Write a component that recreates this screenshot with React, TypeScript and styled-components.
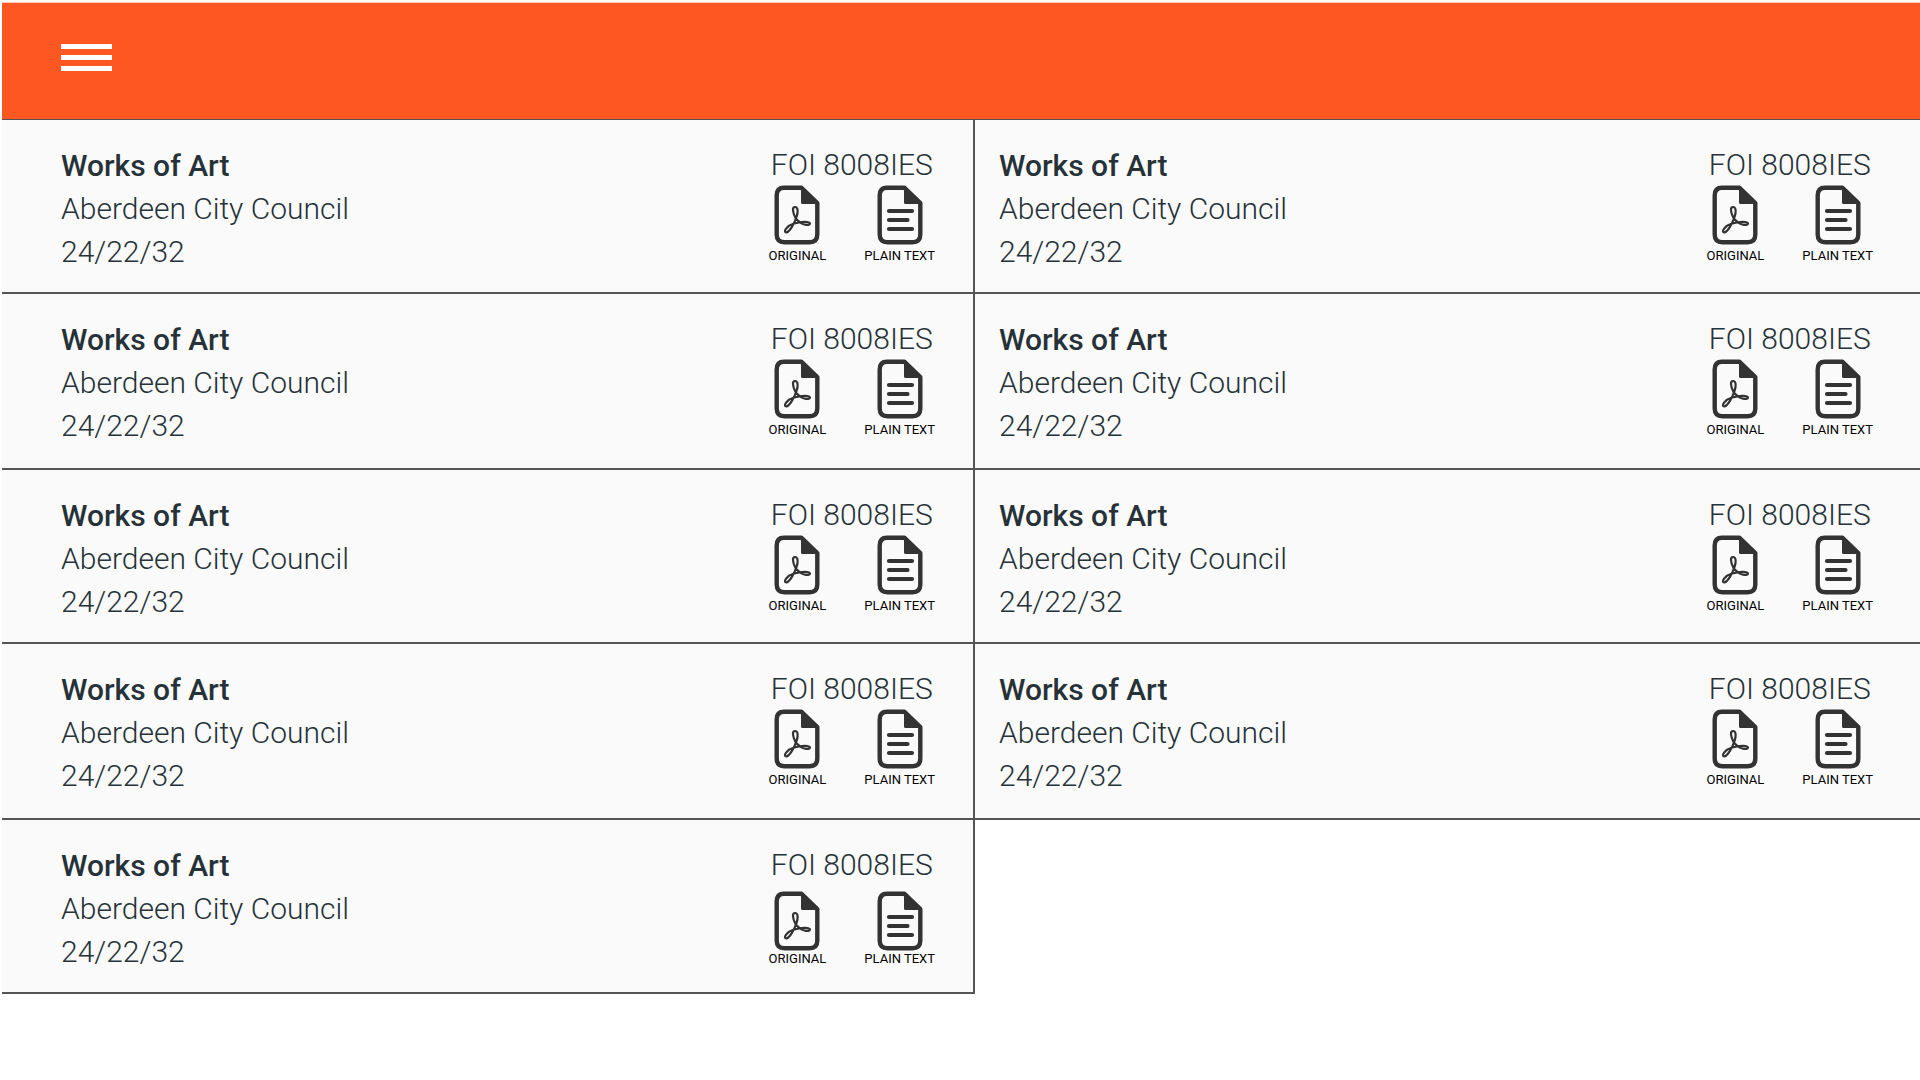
import React from "react";
import styled, { createGlobalStyle } from "styled-components";

const GlobalStyle = createGlobalStyle`
  *, *::before, *::after { box-sizing: border-box; }
  body { margin: 0; background: #fff; font-family: Roboto, "Liberation Sans", sans-serif; color: #263238; }
`;

const Page = styled.div`
  padding: 2px 0 0 2px;
`;

const Header = styled.header`
  display: flex;
  align-items: flex-start;
  height: 118px;
  padding: 41px 59px;
  background: #ff5722;
  border-top: 1px solid #ffccbc;
  border-bottom: 1px solid #555;
`;

const MenuButton = styled.button`
  display: flex;
  flex-direction: column;
  gap: 6px;
  width: 51px;
  padding: 0;
  border: 0;
  background: none;
  cursor: pointer;
`;

const Bar = styled.span`
  width: 100%;
  height: 5px;
  background: #fff;
`;

const Grid = styled.main`
  display: grid;
  grid-template-columns: calc(50% + 14px) 1fr;
  grid-auto-rows: minmax(174px, auto) minmax(176px, auto);
`;

const Card = styled.article<{ $first: boolean }>`
  display: flex;
  justify-content: space-between;
  padding: ${(p) => (p.$first ? "24px 38px 0 59px" : "24px 47px 0 24px")};
  background: #fafafa;
  border-bottom: 2px solid #555;
  border-right: ${(p) => (p.$first ? "2px solid #555" : "0")};
`;

const Lines = styled.div`
  font-size: 30px;
  line-height: 43px;
  font-weight: 300;
`;

const Title = styled.h2`
  margin: 0;
  font-size: 30px;
  line-height: 43px;
  font-weight: 500;
`;

const Text = styled.p`
  margin: 0;
`;

const Files = styled.div`
  display: flex;
  flex-direction: column;
  align-items: center;
`;

const Reference = styled.p`
  margin: 0;
  font-size: 30px;
  line-height: 41px;
  font-weight: 300;
`;

const Downloads = styled.div<{ $spaced: boolean }>`
  display: flex;
  gap: 38px;
  padding-top: ${(p) => (p.$spaced ? "6px" : "0")};
`;

const Download = styled.a<{ $tight: boolean }>`
  display: flex;
  flex-direction: column;
  align-items: center;
  gap: ${(p) => (p.$tight ? "0" : "3px")};
  color: #000;
  font-size: 13px;
  line-height: 16px;
  text-decoration: none;
`;

const Sheet = ({ children }: { children: React.ReactNode }) => (
  <svg width="46" height="60" viewBox="0 0 46 60" fill="none" stroke="#333" aria-hidden="true">
    <path
      d="M10 2.8H27.5L43.3 18V49.5Q43.3 57.2 35.5 57.2H10.5Q2.7 57.2 2.7 49.5V10.5Q2.7 2.8 10 2.8Z"
      strokeWidth="4.4"
      strokeLinejoin="round"
    />
    <path d="M27 1L45 18V19H28.5Q27 19 27 17.5Z" fill="#333" stroke="none" />
    {children}
  </svg>
);

const PdfIcon = () => (
  <Sheet>
    <path
      d="M21.5 33C18.5 27 18 22 21 22C24.500 22 24 28 22.500 32C20.500 38 16 46.500 12.500 47.500C8.500 47 13 40.500 20 38.500C27 36.500 35.500 36 36 38.500C35.500 41.500 26.500 40 21.500 33Z"
      strokeWidth="2.200"
      strokeLinejoin="round"
    />
  </Sheet>
);

const TextIcon = () => (
  <Sheet>
    <path d="M12 26H35M12 35H30.500M12 44H35" strokeWidth="4.200" strokeLinecap="round" />
  </Sheet>
);

const documents = Array.from({ length: 9 }, (_, id) => ({
  id,
  title: "Works of Art",
  authority: "Aberdeen City Council",
  date: "24/22/32",
  reference: "FOI 8008IES",
}));

export default function App() {
  return (
    <>
      <GlobalStyle />
      <Page>
        <Header>
          <MenuButton type="button" aria-label="Menu">
            <Bar />
            <Bar />
            <Bar />
          </MenuButton>
        </Header>
        <Grid>
          {documents.map((doc, i) => {
            const last = i === documents.length - 1;
            return (
              <Card key={doc.id} $first={i % 2 === 0}>
                <Lines>
                  <Title>{doc.title}</Title>
                  <Text>{doc.authority}</Text>
                  <Text>{doc.date}</Text>
                </Lines>
                <Files>
                  <Reference>{doc.reference}</Reference>
                  <Downloads $spaced={last}>
                    <Download href="#original" $tight={last}>
                      <PdfIcon />
                      ORIGINAL
                    </Download>
                    <Download href="#plain-text" $tight={last}>
                      <TextIcon />
                      PLAIN TEXT
                    </Download>
                  </Downloads>
                </Files>
              </Card>
            );
          })}
        </Grid>
      </Page>
    </>
  );
}
